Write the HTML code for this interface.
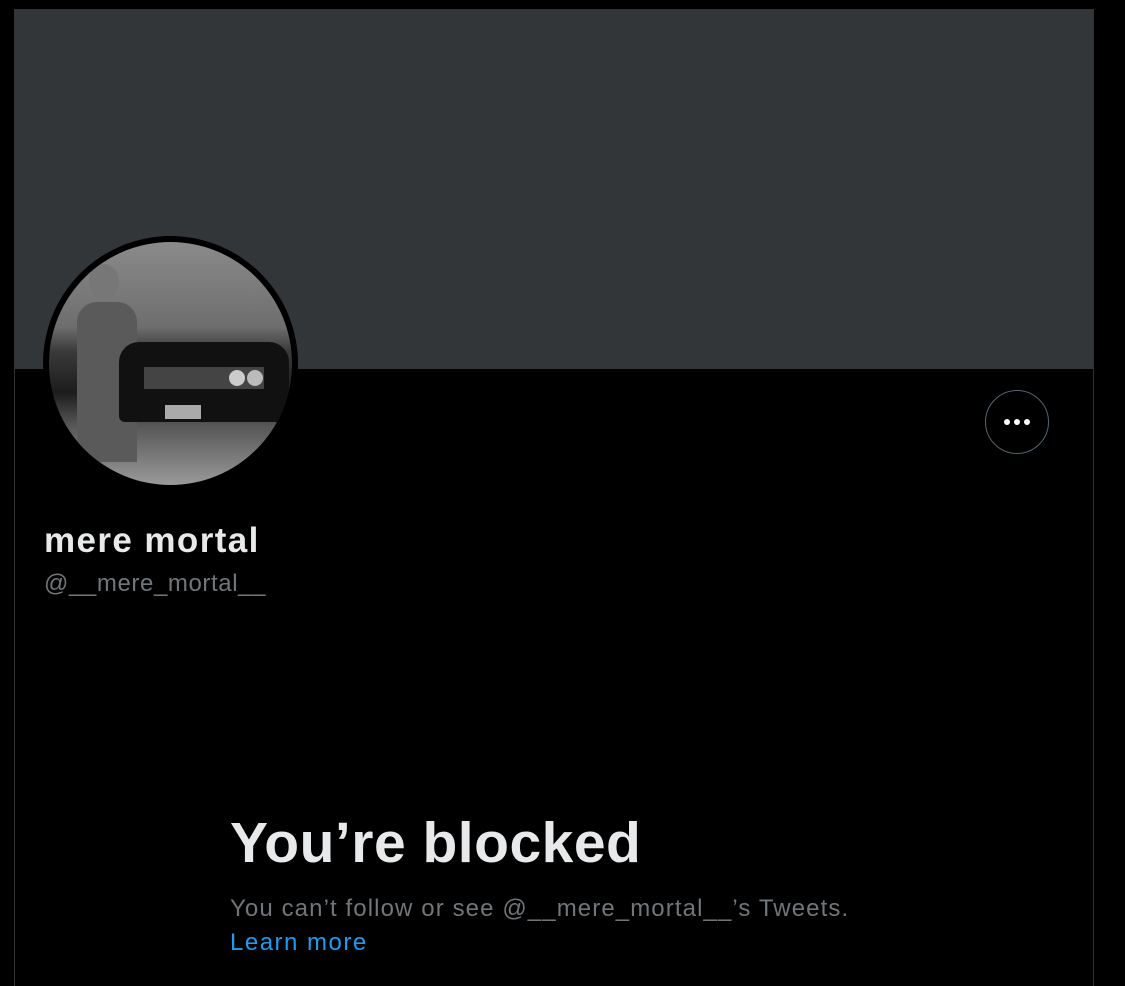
<!DOCTYPE html>
<html><head><meta charset="utf-8"><style>
html,body{margin:0;padding:0;background:#000;width:1125px;height:986px;overflow:hidden;font-family:"Liberation Sans",Arial,sans-serif}
.col{position:absolute;left:14px;top:9px;width:1078px;height:977px;border-left:1px solid #2f3336;border-right:1px solid #2f3336}
.banner{position:absolute;left:15px;top:9px;width:1078px;height:360px;background:#333639}
.av{position:absolute;left:43px;top:236px;width:255px;height:255px;border-radius:50%;background:#000}
.ph{position:absolute;left:6px;top:6px;width:243px;height:243px;border-radius:50%;overflow:hidden;
background:linear-gradient(180deg,#8a8a8a 0%,#6e6e6e 35%,#3a3a3a 45%,#1c1c1c 62%,#555 75%,#9a9a9a 100%)}
.btn{position:absolute;left:985px;top:390px;width:62px;height:62px;border:1px solid #536471;border-radius:50%}
.dot{position:absolute;top:28px;width:6px;height:6px;border-radius:50%;background:#fff}
.t{position:absolute;white-space:nowrap}
</style></head><body>
<div class="col"></div>
<div class="banner"></div>
<div class="av"><div class="ph">
<div style="position:absolute;left:28px;top:60px;width:60px;height:160px;background:#5a5a5a;border-radius:20px 20px 0 0"></div>
<div style="position:absolute;left:40px;top:22px;width:30px;height:36px;background:#777;border-radius:50%"></div>
<div style="position:absolute;left:70px;top:100px;width:170px;height:80px;background:#111;border-radius:20px 20px 6px 6px"></div>
<div style="position:absolute;left:95px;top:125px;width:120px;height:22px;background:#444"></div>
<div style="position:absolute;left:180px;top:128px;width:16px;height:16px;border-radius:50%;background:#ccc"></div>
<div style="position:absolute;left:198px;top:128px;width:16px;height:16px;border-radius:50%;background:#bbb"></div>
<div style="position:absolute;left:116px;top:163px;width:36px;height:14px;background:#aaa"></div>
</div></div>
<div class="btn"><div class="dot" style="left:18px"></div><div class="dot" style="left:28px"></div><div class="dot" style="left:38px"></div></div>
<div class="t" style="left:44px;top:521px;font-size:35px;font-weight:bold;color:#e7e9ea;letter-spacing:1.4px">mere mortal</div>
<div class="t" style="left:44px;top:570px;font-size:24px;color:#71767b;letter-spacing:0.6px">@__mere_mortal__</div>
<div class="t" style="left:230px;top:810px;font-size:57px;font-weight:bold;color:#e7e9ea;letter-spacing:0.5px">You’re blocked</div>
<div class="t" style="left:230px;top:895px;font-size:24px;color:#71767b;letter-spacing:1.1px">You can’t follow or see @__mere_mortal__’s Tweets.</div>
<div class="t" style="left:230px;top:929px;font-size:24px;color:#1d9bf0;letter-spacing:1.5px">Learn more</div>
</body></html>
